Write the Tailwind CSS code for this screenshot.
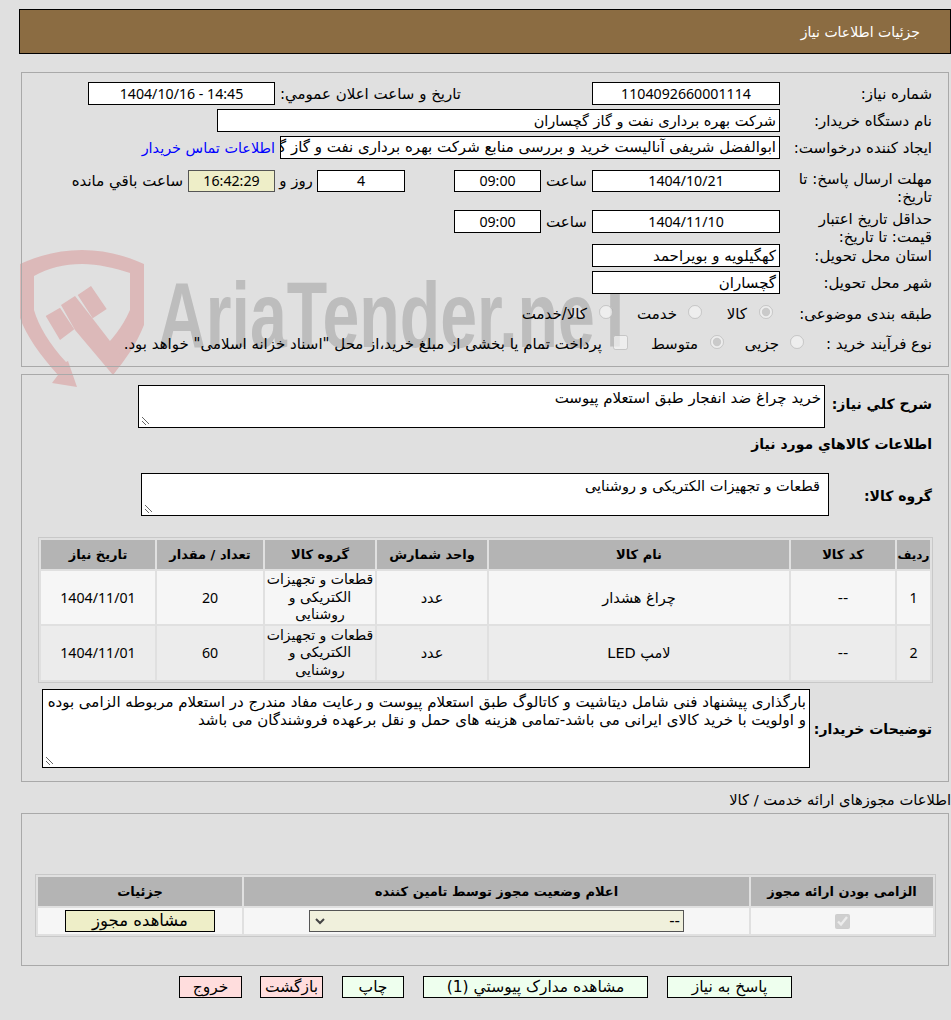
<!DOCTYPE html>
<html lang="fa" dir="rtl">
<head>
<meta charset="utf-8">
<script src="https://cdn.jsdelivr.net/npm/@tailwindcss/browser@4"></script>
</head>
<body class="bg-[#e0e0e0] text-[15px] leading-[18px] text-black font-['DejaVu_Sans',sans-serif]">
<div class="relative h-[1020px] w-[951px] overflow-hidden pt-[9px]">
  <svg class="absolute left-0 top-0 h-[400px] w-[160px]" viewBox="0 0 160 400"><path fill="#dcb9b9" d="M20 264 C40 255 60 250 82 250 C104 250 124 255 144 264 L144 325 C136 345 125 360 113 375 L99 352 C112 340 122 328 130 310 L130 273 C115 268 98 264 82 264 C64 264 48 268 34 276 L34 310 C38 325 50 345 66 362 L68 361 L77 387 L52 383 L58 375 C40 355 26 335 20 318 Z"/><path fill="#dcb9b9" d="M45.7 316 L60 307.7 L74.3 329.3 L60 340Z M61 305 L75 296 L93 319 L123 358 L113 375 L75 330Z M77.7 295 L91 286 L106.7 309 L92.7 318.3Z"/></svg>
  <div class="absolute left-[158px] top-[265px] origin-left scale-x-[0.72] whitespace-nowrap font-['Liberation_Sans',sans-serif] text-[92px] leading-[100px] font-bold text-[#bdbdbd]" dir="ltr">AriaTender.neT</div>

  <div class="relative ml-[19px] flex h-[45px] items-center border border-black bg-[#8b6c42] pr-[30px] text-[14px] text-white">جزئیات اطلاعات نیاز</div>

  <section class="relative ml-[21px] mr-[2px] mt-[18px] h-[295px] border border-[#a9a9a9] pr-[16px] pt-[9px]">
    <div class="flex h-[27px]"><div class="w-[152px] pt-[3px]">شماره نیاز:</div><div class="flex h-[23px] w-[188px] items-center justify-center border border-black bg-white font-['Noto_Sans',sans-serif] text-[14.2px]">1104092660001114</div><div class="w-[131px]"></div><div class="w-[181px] whitespace-nowrap pt-[3px]">تاریخ و ساعت اعلان عمومي:</div><div class="mr-[5px] flex h-[23px] w-[187px] items-center justify-center border border-black bg-white font-['Noto_Sans',sans-serif] text-[14.2px]" dir="ltr">1404/10/16 - 14:45</div></div>
    <div class="flex h-[27px]"><div class="w-[152px] whitespace-nowrap pt-[3px]">نام دستگاه خریدار:</div><div class="flex h-[23px] w-[563px] items-center border border-black bg-white px-[3px] text-[14.5px]">شرکت بهره برداری نفت و گاز گچساران</div></div>
    <div class="flex h-[34px]"><div class="w-[152px] whitespace-nowrap pt-[3px]">ایجاد کننده درخواست:</div><div class="h-[23px] w-[500px] overflow-hidden whitespace-nowrap border border-black bg-white px-[3px] leading-[21px]">ابوالفضل شریفی آنالیست خرید و بررسی منابع شرکت بهره برداری نفت و گاز گچساران</div><a class="mr-[5px] whitespace-nowrap pt-[3px] text-[14.4px] text-[#0000ff]">اطلاعات تماس خریدار</a></div>
    <div class="flex h-[40px]"><div class="w-[152px] whitespace-nowrap">مهلت ارسال پاسخ: تا<br>تاریخ:</div><div class="flex h-[22px] w-[188px] items-center justify-center border border-black bg-white font-['Noto_Sans',sans-serif] text-[14.2px]">1404/10/21</div><div class="w-[51px] pt-[2px] text-center">ساعت</div><div class="flex h-[22px] w-[87px] items-center justify-center border border-black bg-white font-['Noto_Sans',sans-serif] text-[14.2px]">09:00</div><div class="w-[49px]"></div><div class="flex h-[22px] w-[88px] items-center justify-center border border-black bg-white font-['Noto_Sans',sans-serif] text-[14.2px]">4</div><div class="w-[42px] pt-[2px] text-center">روز و</div><div class="flex h-[22px] w-[87px] items-center justify-center border border-[#555] bg-[#eeeec8] font-['Noto_Sans',sans-serif] text-[14.2px]">16:42:29</div><div class="mr-[5px] whitespace-nowrap pt-[2px]">ساعت باقي مانده</div></div>
    <div class="flex h-[34px]"><div class="w-[152px] whitespace-nowrap">حداقل تاریخ اعتبار<br>قیمت: تا تاریخ:</div><div class="flex h-[23px] w-[188px] items-center justify-center border border-black bg-white font-['Noto_Sans',sans-serif] text-[14.2px]">1404/11/10</div><div class="w-[51px] pt-[3px] text-center">ساعت</div><div class="flex h-[23px] w-[87px] items-center justify-center border border-black bg-white font-['Noto_Sans',sans-serif] text-[14.2px]">09:00</div></div>
    <div class="flex h-[27px]"><div class="w-[152px] whitespace-nowrap pt-[3px]">استان محل تحویل:</div><div class="flex h-[23px] w-[188px] items-center border border-black bg-white px-[3px]">کهگیلویه و بویراحمد</div></div>
    <div class="flex h-[28px]"><div class="w-[152px] whitespace-nowrap pt-[3px]">شهر محل تحویل:</div><div class="flex h-[23px] w-[188px] items-center border border-black bg-white px-[3px]">گچساران</div></div>
    <div class="flex h-[30px] items-center"><div class="w-[152px] whitespace-nowrap">طبقه بندی موضوعی:</div><input type="radio" checked disabled class="mb-[4px] ml-[12px] mr-[7px] size-[14px]"><span class="w-[45px]">کالا</span><input type="radio" disabled class="mb-[4px] ml-[11px] size-[14px]"><span class="w-[64px]">خدمت</span><input type="radio" disabled class="mb-[4px] ml-[12px] size-[14px]"><span>کالا/خدمت</span></div>
    <div class="flex h-[30px] items-center"><div class="w-[128px] whitespace-nowrap">نوع فرآیند خرید :</div><input type="radio" disabled class="mb-[4px] ml-[11px] size-[14px]"><span class="w-[55px]">جزیی</span><input type="radio" checked disabled class="mb-[4px] ml-[12px] size-[14px]"><span class="w-[70px]">متوسط</span><input type="checkbox" disabled class="mb-[4px] ml-[11px] size-[15px]"><span class="whitespace-nowrap">پرداخت تمام یا بخشی از مبلغ خرید،از محل "اسناد خزانه اسلامی" خواهد بود.</span></div>
  </section>

  <section class="relative ml-[21px] mr-[2px] mt-[7px] h-[408px] border border-[#a9a9a9] pr-[16px] pt-[10px]">
    <div class="flex"><div class="w-[107px] pt-[10px] text-[14px] font-bold">شرح کلي نیاز:</div><div class="relative h-[43px] w-[687px] border border-black bg-white p-[3px]">خرید چراغ ضد انفجار طبق استعلام پیوست<svg class="absolute bottom-[2px] left-[2px] size-[9px]" viewBox="0 0 9 9"><path d="M1 1 L8 8 M1 5 L5 9" stroke="#666" fill="none"/></svg></div></div>
    <div class="mt-[7px] text-[14px] font-bold">اطلاعات کالاهاي مورد نیاز</div>
    <div class="mt-[20px] flex"><div class="w-[103px] pt-[14px] text-[14px] font-bold">گروه کالا:</div><div class="relative h-[43px] w-[688px] border border-black bg-white px-[8px] py-[3px] text-[14.5px]">قطعات و تجهیزات الکتریکی و روشنایی<svg class="absolute bottom-[2px] left-[2px] size-[9px]" viewBox="0 0 9 9"><path d="M1 1 L8 8 M1 5 L5 9" stroke="#666" fill="none"/></svg></div></div>
    <table class="-mr-[1px] mt-[21px] w-[895px] table-fixed border-separate border-spacing-[2px] border border-[#c8c8c8] text-center text-[14.5px]">
      <thead class="bg-[#b4b4b4] text-[13px] font-bold"><tr class="h-[29px]"><th class="w-[33px] whitespace-nowrap text-[12px]">ردیف</th><th class="w-[104px]">کد کالا</th><th class="w-[300px]">نام کالا</th><th class="w-[110px]">واحد شمارش</th><th class="w-[110px]">گروه کالا</th><th class="w-[106px]">تعداد / مقدار</th><th>تاریخ نیاز</th></tr></thead>
      <tbody>
        <tr class="h-[53px] bg-[#f6f6f6]"><td class="font-['Noto_Sans',sans-serif] text-[14.2px]">1</td><td>--</td><td>چراغ هشدار</td><td>عدد</td><td class="whitespace-nowrap text-[14px] leading-[17.5px]">قطعات و تجهیزات<br>الکتریکی و<br>روشنایی</td><td class="font-['Noto_Sans',sans-serif] text-[14.2px]">20</td><td class="font-['Noto_Sans',sans-serif] text-[14.2px]">1404/11/01</td></tr>
        <tr class="h-[54px] bg-[#ececec]"><td class="font-['Noto_Sans',sans-serif] text-[14.2px]">2</td><td>--</td><td>لامپ LED</td><td>عدد</td><td class="whitespace-nowrap text-[14px] leading-[17.5px]">قطعات و تجهیزات<br>الکتریکی و<br>روشنایی</td><td class="font-['Noto_Sans',sans-serif] text-[14.2px]">60</td><td class="font-['Noto_Sans',sans-serif] text-[14.2px]">1404/11/01</td></tr>
      </tbody>
    </table>
    <div class="mt-[6px] flex"><div class="w-[122px] whitespace-nowrap pt-[31px] text-[14px] font-bold">توضیحات خریدار:</div><div class="relative h-[79px] w-[768px] border border-black bg-white p-[3px]">بارگذاری پیشنهاد فنی شامل دیتاشیت و کاتالوگ طبق استعلام پیوست و رعایت مفاد مندرج در استعلام مربوطه الزامی بوده و اولویت با خرید کالای ایرانی می باشد-تمامی هزینه های حمل و نقل برعهده فروشندگان می باشد<svg class="absolute bottom-[2px] left-[2px] size-[9px]" viewBox="0 0 9 9"><path d="M1 1 L8 8 M1 5 L5 9" stroke="#666" fill="none"/></svg></div></div>
  </section>

  <div class="mt-[9px] h-[22px] whitespace-nowrap text-[14.7px]">اطلاعات مجوزهای ارائه خدمت / کالا</div>

  <section class="ml-[21px] mr-[2px] h-[153px] border border-[#a9a9a9] pt-[60px]">
    <table class="mr-[12px] w-[901px] table-fixed border-separate border-spacing-[2px] border border-[#c8c8c8] text-center">
      <thead class="bg-[#b4b4b4] text-[13px] font-bold"><tr class="h-[29px]"><th class="w-[182px]">الزامی بودن ارائه مجوز</th><th class="w-[505px]">اعلام وضعیت مجوز توسط تامین کننده</th><th>جزئیات</th></tr></thead>
      <tbody><tr class="h-[26px] bg-[#f6f6f6]"><td><input type="checkbox" checked disabled class="size-[15px] align-middle"></td><td><div class="mx-auto flex h-[22px] w-[375px] items-center justify-between border border-[#555] bg-[#f0f0dc] pl-[4px] pr-[3px]"><span>--</span><svg class="size-[12px]" viewBox="0 0 12 12"><path d="M2 4 L6 8 L10 4" stroke="#444" stroke-width="2" fill="none"/></svg></div></td><td><div class="mx-auto flex h-[22px] w-[150px] items-center justify-center border border-black bg-[#eeeec8] text-[16.5px]">مشاهده مجوز</div></td></tr></tbody>
    </table>
  </section>

  <div class="mt-[10px] flex gap-[19px] pr-[159px] text-[15.5px]">
    <div class="flex h-[22px] w-[125px] items-center justify-center border border-black bg-[#eeffee]">پاسخ به نیاز</div>
    <div class="flex h-[22px] w-[225px] items-center justify-center border border-black bg-[#eeffee]">مشاهده مدارک پیوستي (1)</div>
    <div class="flex h-[22px] w-[62px] items-center justify-center border border-black bg-[#eeffee]">چاپ</div>
    <div class="flex h-[22px] w-[63px] items-center justify-center border border-black bg-[#ffdddd]">بازگشت</div>
    <div class="-mr-[1px] flex h-[22px] w-[63px] items-center justify-center border border-black bg-[#ffdddd]">خروج</div>
  </div>
</div>
</body>
</html>
